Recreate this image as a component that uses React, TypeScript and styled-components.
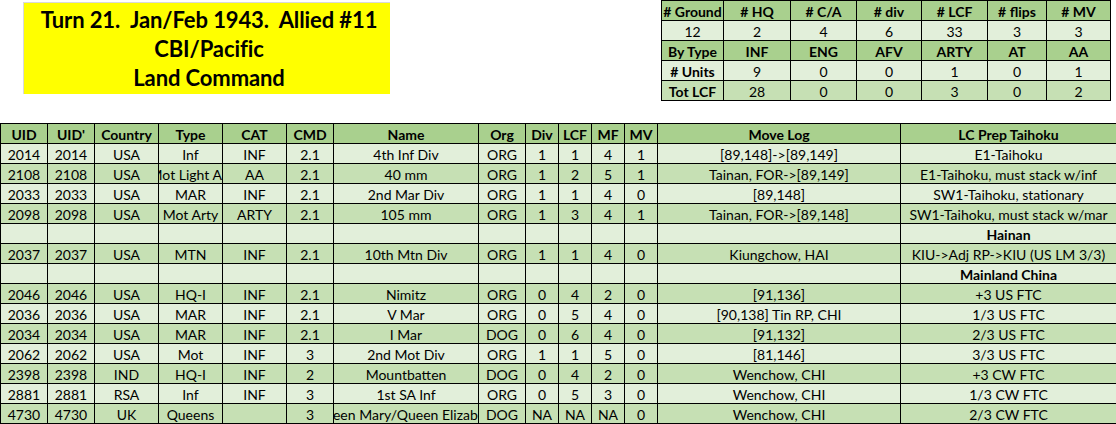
import React from "react";
import styled, { createGlobalStyle } from "styled-components";

const GlobalStyle = createGlobalStyle`
  html, body {
    margin: 0;
    padding: 0;
    background: #ffffff;
  }
  body {
    font-family: Lato, "Liberation Sans", sans-serif;
    color: #000;
  }
`;

const GREEN_HEAD = "#a9d08e";
const GREEN_DARK = "#c6e0b4";
const GREEN_LIGHT = "#e2efda";

type Tone = "head" | "dark" | "light";

const toneColor = (t: Tone) =>
  t === "head" ? GREEN_HEAD : t === "dark" ? GREEN_DARK : GREEN_LIGHT;

const Page = styled.div`
  width: 1116px;
  height: 424px;
  overflow: hidden;
  display: flex;
  flex-direction: column;
`;

const TopBand = styled.div`
  height: 123px;
  display: flex;
  justify-content: space-between;
  align-items: flex-start;
`;

const TitleBox = styled.div`
  margin: 2px 0 0 23px;
  width: 367px;
  height: 92px;
  box-sizing: border-box;
  background: #ffff00;
  border-top: 1px solid #d9d9d9;
  border-left: 1px solid #d9d9d9;
  padding: 2px 0 0 4px;
  display: flex;
  flex-direction: column;
  align-items: center;
`;

const TitleLine = styled.div`
  font-family: Lato, "Liberation Sans", sans-serif;
  font-weight: 700;
  font-size: 22px;
  line-height: 29px;
  white-space: pre;
  letter-spacing: -0.1px;
`;

const summaryCols = "62px 67px 66px 65px 66px 59px 64px";

const SummaryGrid = styled.div`
  margin-right: 5px;
  display: grid;
  grid-template-columns: ${summaryCols};
  border-left: 1px solid #000;
  border-top: 1px solid #000;
`;

const SummaryCell = styled.div<{ $tone: Tone; $bold?: boolean }>`
  height: 20px;
  box-sizing: border-box;
  border-right: 1px solid #000;
  border-bottom: 1px solid #000;
  background: ${(p) => toneColor(p.$tone)};
  font-weight: ${(p) => (p.$bold ? 700 : 400)};
  font-size: 14px;
  display: flex;
  align-items: center;
  justify-content: center;
  padding-top: 2px;
  white-space: nowrap;
  overflow: hidden;
`;

const sheetCols =
  "47px 47px 64px 64px 64px 47px 145px 47px 33px 33px 33px 33px 243px 216px";

const Sheet = styled.div`
  width: 1117px;
  border-left: 1px solid #000;
  border-top: 1px solid #000;
`;

const SheetRow = styled.div<{ $tone: Tone }>`
  display: grid;
  grid-template-columns: ${sheetCols};
  background: ${(p) => toneColor(p.$tone)};
  font-weight: ${(p) => (p.$tone === "head" ? 700 : 400)};
`;

const Cell = styled.div<{ $bold?: boolean }>`
  height: 20px;
  box-sizing: border-box;
  border-right: 1px solid #000;
  border-bottom: 1px solid #000;
  font-size: 14px;
  font-weight: ${(p) => (p.$bold ? 700 : "inherit")};
  display: flex;
  align-items: center;
  justify-content: center;
  padding-top: 2px;
  white-space: nowrap;
  overflow: hidden;
`;

const CellText = styled.span`
  flex-shrink: 0;
`;

const summaryRows: { tone: Tone; bold: boolean; label: boolean; cells: string[] }[] = [
  { tone: "head", bold: true, label: true, cells: ["# Ground", "# HQ", "# C/A", "# div", "# LCF", "# flips", "# MV"] },
  { tone: "light", bold: false, label: false, cells: ["12", "2", "4", "6", "33", "3", "3"] },
  { tone: "head", bold: true, label: true, cells: ["By Type", "INF", "ENG", "AFV", "ARTY", "AT", "AA"] },
  { tone: "light", bold: false, label: true, cells: ["# Units", "9", "0", "0", "1", "0", "1"] },
  { tone: "dark", bold: false, label: true, cells: ["Tot LCF", "28", "0", "0", "3", "0", "2"] },
];

const headers = [
  "UID", "UID'", "Country", "Type", "CAT", "CMD", "Name", "Org",
  "Div", "LCF", "MF", "MV", "Move Log", "LC Prep Taihoku",
];

type Unit = string[];
type Line = { unit?: Unit; section?: string };

const lines: Line[] = [
  { unit: ["2014", "2014", "USA", "Inf", "INF", "2.1", "4th Inf Div", "ORG", "1", "1", "4", "1", "[89,148]->[89,149]", "E1-Taihoku"] },
  { unit: ["2108", "2108", "USA", "Mot Light AA", "AA", "2.1", "40 mm", "ORG", "1", "2", "5", "1", "Tainan, FOR->[89,149]", "E1-Taihoku, must stack w/inf"] },
  { unit: ["2033", "2033", "USA", "MAR", "INF", "2.1", "2nd Mar Div", "ORG", "1", "1", "4", "0", "[89,148]", "SW1-Taihoku, stationary"] },
  { unit: ["2098", "2098", "USA", "Mot Arty", "ARTY", "2.1", "105 mm", "ORG", "1", "3", "4", "1", "Tainan, FOR->[89,148]", "SW1-Taihoku, must stack w/mar"] },
  { section: "Hainan" },
  { unit: ["2037", "2037", "USA", "MTN", "INF", "2.1", "10th Mtn Div", "ORG", "1", "1", "4", "0", "Kiungchow, HAI", "KIU->Adj RP->KIU (US LM 3/3)"] },
  { section: "Mainland China" },
  { unit: ["2046", "2046", "USA", "HQ-I", "INF", "2.1", "Nimitz", "ORG", "0", "4", "2", "0", "[91,136]", "+3 US FTC"] },
  { unit: ["2036", "2036", "USA", "MAR", "INF", "2.1", "V Mar", "ORG", "0", "5", "4", "0", "[90,138] Tin RP, CHI", "1/3 US FTC"] },
  { unit: ["2034", "2034", "USA", "MAR", "INF", "2.1", "I Mar", "DOG", "0", "6", "4", "0", "[91,132]", "2/3 US FTC"] },
  { unit: ["2062", "2062", "USA", "Mot", "INF", "3", "2nd Mot Div", "ORG", "1", "1", "5", "0", "[81,146]", "3/3 US FTC"] },
  { unit: ["2398", "2398", "IND", "HQ-I", "INF", "2", "Mountbatten", "DOG", "0", "4", "2", "0", "Wenchow, CHI", "+3 CW FTC"] },
  { unit: ["2881", "2881", "RSA", "Inf", "INF", "3", "1st SA Inf", "ORG", "0", "5", "3", "0", "Wenchow, CHI", "1/3 CW FTC"] },
  { unit: ["4730", "4730", "UK", "Queens", "", "3", "Queen Mary/Queen Elizabeth", "DOG", "NA", "NA", "NA", "0", "Wenchow, CHI", "2/3 CW FTC"] },
];

function Summary() {
  return (
    <SummaryGrid>
      {summaryRows.map((row, r) =>
        row.cells.map((c, i) => (
          <SummaryCell key={r + "-" + i} $tone={row.tone} $bold={row.bold || (row.label && i === 0)}>
            {c}
          </SummaryCell>
        ))
      )}
    </SummaryGrid>
  );
}

function UnitSheet() {
  return (
    <Sheet>
      <SheetRow $tone="head">
        {headers.map((h) => (
          <Cell key={h}>
            <CellText>{h}</CellText>
          </Cell>
        ))}
      </SheetRow>
      {lines.map((line, idx) => {
        const tone: Tone = idx % 2 === 0 ? "light" : "dark";
        const cells = line.unit ?? headers.map((_, i) => (i === 13 ? line.section! : ""));
        return (
          <SheetRow key={idx} $tone={tone}>
            {cells.map((c, i) => (
              <Cell key={i} $bold={!line.unit}>
                <CellText>{c}</CellText>
              </Cell>
            ))}
          </SheetRow>
        );
      })}
    </Sheet>
  );
}

export default function App() {
  return (
    <>
      <GlobalStyle />
      <Page>
        <TopBand>
          <TitleBox>
            <TitleLine>{"Turn 21.  Jan/Feb 1943.  Allied #11"}</TitleLine>
            <TitleLine>CBI/Pacific</TitleLine>
            <TitleLine>Land Command</TitleLine>
          </TitleBox>
          <Summary />
        </TopBand>
        <UnitSheet />
      </Page>
    </>
  );
}
